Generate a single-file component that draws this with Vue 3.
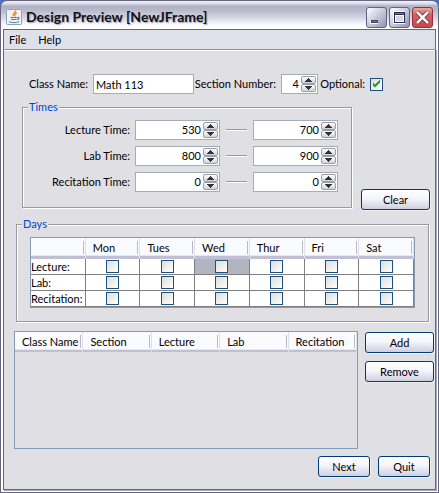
<script setup>
import { reactive, ref } from 'vue'

const className = ref('Math 113')
const section = ref(4)
const optional = ref(true)

const times = reactive([
  { name: 'Lecture Time', start: 530, end: 700 },
  { name: 'Lab Time', start: 800, end: 900 },
  { name: 'Recitation Time', start: 0, end: 0 },
])

const days = ['Mon', 'Tues', 'Wed', 'Thur', 'Fri', 'Sat']
const kinds = reactive(
  ['Lecture', 'Lab', 'Recitation'].map((name) => ({ name, days: days.map(() => false) })),
)
const selected = ref('0-2')

const columns = ['Class Name', 'Section', 'Lecture', 'Lab', 'Recitation']

function clearTimes() {
  times.forEach((t) => {
    t.start = 0
    t.end = 0
  })
}
</script>

<template>
  <div class="desktop">
    <div class="window">
      <header class="titlebar">
        <svg class="app-icon" viewBox="0 0 16 16" aria-hidden="true">
          <rect x="0.5" y="0.5" width="15" height="15" rx="1" fill="#eef3f7" stroke="#8fa3b5" />
          <path d="M9.500 1.500c.8 2-3.500 2.800-2.200 5.500M10.800 4c-2.600 1-2.300 2-1.600 3.500" fill="none" stroke="#f08a24" stroke-width="1.400" />
          <path d="M4.500 8.500h6.500M5 10.500h5.500M3 12.800c2.500 1 7.500 1 10 0M11.500 8.500c2-.5 2 1.500-.5 2" fill="none" stroke="#4f7ea3" stroke-width="1.200" />
        </svg>
        <h1>Design Preview [NewJFrame]</h1>
        <button class="caption" type="button" aria-label="Minimize">
          <svg viewBox="0 0 21 21"><path d="M4 13h8v4H4z" fill="#fff" /><path d="M5 13h7v3H5z" fill="#3f3f63" /><path d="M6 14h5v1H6z" fill="#77779b" /></svg>
        </button>
        <button class="caption" type="button" aria-label="Maximize">
          <svg viewBox="0 0 21 21"><path d="M4 4h12v13H4z" fill="#fff" /><path d="M5 5h11v11H5z" fill="#2b2b49" /><path d="M6 6h9v1H6z" fill="#77779b" /><path d="M6 8h9v7H6z" fill="#fff" /><path d="M7 9h7v5H7z" fill="#d5d5e3" /></svg>
        </button>
        <button class="caption close" type="button" aria-label="Close">
          <svg viewBox="0 0 21 21"><path d="M5 5l11 11M16 5L5 16" stroke="#5b2634" stroke-width="4" /><path d="M5 5l11 11M16 5L5 16" stroke="#fff" stroke-width="2.500" /></svg>
        </button>
      </header>

      <nav class="menubar">
        <button type="button">File</button>
        <button type="button">Help</button>
      </nav>

      <main>
        <div class="top-row">
          <label for="class-name">Class Name:</label>
          <input id="class-name" v-model="className" class="field" type="text" />
          <label for="section">Section Number:</label>
          <div class="spinner">
            <input id="section" v-model.number="section" type="text" inputmode="numeric" />
            <div class="arrows">
              <button type="button" aria-label="Increase section" @click="section++"><svg viewBox="0 0 7 4"><path d="M3 0h1v1h1v1h1v1h1v1H0V3h1V2h1V1h1z" /></svg></button>
              <button type="button" aria-label="Decrease section" @click="section--"><svg viewBox="0 0 7 4"><path d="M0 0h7v1H6v1H5v1H4v1H3V3H2V2H1V1H0z" /></svg></button>
            </div>
          </div>
          <label for="optional">Optional:</label>
          <input id="optional" v-model="optional" class="check" type="checkbox" />
        </div>

        <div class="times-row">
          <fieldset class="times">
            <legend>Times</legend>
            <div v-for="(t, i) in times" :key="t.name" class="time">
              <label :for="`start-${i}`">{{ t.name }}:</label>
              <template v-for="edge in ['start', 'end']" :key="edge">
                <span v-if="edge === 'end'" class="dash"></span>
                <div class="spinner">
                  <input :id="`${edge}-${i}`" v-model.number="t[edge]" type="text" inputmode="numeric" :aria-label="`${t.name} ${edge}`" />
                  <div class="arrows">
                    <button type="button" :aria-label="`Increase ${t.name} ${edge}`" @click="t[edge]++"><svg viewBox="0 0 7 4"><path d="M3 0h1v1h1v1h1v1h1v1H0V3h1V2h1V1h1z" /></svg></button>
                    <button type="button" :aria-label="`Decrease ${t.name} ${edge}`" @click="t[edge]--"><svg viewBox="0 0 7 4"><path d="M0 0h7v1H6v1H5v1H4v1H3V3H2V2H1V1H0z" /></svg></button>
                  </div>
                </div>
              </template>
            </div>
          </fieldset>
          <button class="button" type="button" @click="clearTimes">Clear</button>
        </div>

        <fieldset class="days">
          <legend>Days</legend>
          <table class="grid">
            <thead>
              <tr>
                <th aria-label="Type"></th>
                <th v-for="day in days" :key="day" scope="col">{{ day }}</th>
              </tr>
            </thead>
            <tbody>
              <tr v-for="(kind, r) in kinds" :key="kind.name">
                <th scope="row">{{ kind.name }}:</th>
                <td v-for="(day, c) in days" :key="day" :class="{ selected: selected === `${r}-${c}` }" @click="selected = `${r}-${c}`">
                  <input v-model="kind.days[c]" class="check" type="checkbox" :aria-label="`${kind.name} ${day}`" />
                </td>
              </tr>
            </tbody>
          </table>
        </fieldset>

        <div class="classes-row">
          <div class="list">
            <table class="classes">
              <thead>
                <tr>
                  <th v-for="c in columns" :key="c" scope="col">{{ c }}</th>
                </tr>
              </thead>
            </table>
          </div>
          <div class="stack">
            <button class="button" type="button">Add</button>
            <button class="button" type="button">Remove</button>
          </div>
        </div>

        <footer>
          <button class="button" type="button">Next</button>
          <button class="button" type="button">Quit</button>
        </footer>
      </main>
    </div>
  </div>
</template>

<style>
body {
  background: #4a70c8;
}
</style>

<style scoped>
* {
  box-sizing: border-box;
}

.desktop {
  font: 11px/14px Lato, sans-serif;
  color: #000;
}

button,
input {
  font: inherit;
  color: inherit;
  margin: 0;
}

.window {
  display: flex;
  flex-direction: column;
  min-height: 100vh;
  border: 1px solid #68667f;
  border-radius: 7px 7px 0 0;
  background: linear-gradient(#f4f4f8 0, #d8d8e4 3px, #b0b0c8 5px, #b8b8cc 9px, #d8d8e4 17px, #fbfbfd 24px, #fff 27px);
  padding: 0 2px 2px;
}

.titlebar {
  display: flex;
  align-items: center;
  gap: 2px;
  height: 28px;
  padding: 4px 3px 0 3px;
}

.app-icon {
  width: 16px;
  height: 16px;
}

h1 {
  flex: 1;
  margin: 0 0 0 2px;
  font: bold 14px/18px Lato, sans-serif;
  color: #111118;
  text-shadow: 1px 1px 1px #a5a5b8;
  white-space: nowrap;
}

.caption {
  width: 21px;
  height: 21px;
  padding: 0;
  border: 1px solid #626287;
  border-radius: 3px;
  background: linear-gradient(135deg, #fff, #c8c8dc 50%, #9292b4);
  overflow: hidden;
}

.caption svg {
  display: block;
  width: 21px;
  height: 21px;
  margin: -1px;
}

.caption.close {
  border-color: #93303f;
  background: linear-gradient(#f0a898, #d96060 35%, #c84850);
}

.menubar {
  display: flex;
  gap: 12px;
  height: 20px;
  padding: 0 5px;
  border: solid #68667f;
  border-width: 1px 1px 0;
  background: #dee1ea;
}

.menubar button {
  padding: 0;
  border: 0;
  background: none;
}

main {
  flex: 1;
  display: flex;
  flex-direction: column;
  padding: 24px 1px 12px 10px;
  border: 1px solid #68667f;
  border-top-color: #929298;
  background: #e0dfe3;
  box-shadow: 1px 1px 0 #a9a8bc, inset 0 1px 0 #fff;
}

.top-row {
  display: grid;
  grid-template-columns: 79px 1fr 87px 37px 52px 13px;
  align-items: center;
  padding-right: 51px;
}

.top-row label,
.time label {
  padding-right: 5px;
  text-align: right;
  white-space: nowrap;
}

.field,
.spinner {
  height: 20px;
  min-width: 0;
  border: 1px solid #a5acb2;
  background: #fff;
}

.field {
  padding: 0 2px;
}

.spinner {
  display: flex;
  padding: 1px;
}

.spinner input {
  flex: 1;
  width: 0;
  min-width: 0;
  padding: 0 2px 0 0;
  border: 0;
  background: none;
  text-align: right;
}

.arrows {
  display: flex;
  flex-direction: column;
  width: 15px;
}

.arrows button {
  flex: 1;
  display: flex;
  align-items: center;
  justify-content: center;
  min-height: 0;
  padding: 0;
  border: 1px solid #9c9cab;
  border-radius: 2px;
  background: linear-gradient(#fff, #d0d0dc);
}

.arrows svg {
  width: 7px;
  height: 4px;
  fill: #333;
}

.check {
  appearance: none;
  display: block;
  width: 13px;
  height: 13px;
  border: 1px solid #1c5180;
  background: linear-gradient(135deg, #dcdcd7, #fff);
}

.check:checked::before {
  content: "";
  display: block;
  width: 11px;
  height: 11px;
  background: #21a121;
  clip-path: polygon(2px 4px, 4px 6px, 9px 1px, 9px 4px, 4px 9px, 2px 7px);
}

fieldset {
  min-width: 0;
  margin: 0;
  border: 1px solid #9a9a9d;
  box-shadow: 1px 1px 0 #fff, inset 1px 1px 0 #fff;
}

legend {
  margin-left: -1px;
  padding: 0 1px;
  background: #e0dfe3;
  color: #0046d5;
}

.times-row {
  display: flex;
  align-items: flex-end;
  gap: 9px;
  margin: 6px 4px 0 8px;
}

.times {
  flex: 1;
  display: flex;
  flex-direction: column;
  gap: 6px;
  margin-bottom: 2px;
  padding: 6px 13px 15px 6px;
}

.time {
  display: grid;
  grid-template-columns: 106px 1fr 33px 1fr;
  align-items: center;
}

.dash {
  height: 2px;
  margin: 0 6px;
  border-top: 1px solid #9a9a9d;
  border-bottom: 1px solid #fff;
}

.button {
  width: 69px;
  height: 21px;
  padding: 0;
  border: 1px solid #003c74;
  border-radius: 3px;
  background: linear-gradient(#fff, #f5f5fb 45%, #cfcfe2);
  box-shadow: 1px 1px 0 #f0f0ec;
}

.days {
  margin: 7px 5px 0 2px;
  padding: 6px 13px 13px;
}

.days legend {
  margin-left: -8px;
}

table {
  width: 100%;
  table-layout: fixed;
  border-spacing: 0;
}

th {
  font-weight: normal;
  text-align: left;
  white-space: nowrap;
}

thead th {
  height: 20px;
  padding: 0 0 1px 7px;
  border-right: 1px solid #e0dfe8;
  background:
    linear-gradient(#b8b8c8, #b8b8c8) right 1px top 3px / 1px 13px no-repeat,
    linear-gradient(#fafbff 17px, #e6e5f0 17px, #e6e5f0 18px, #c0bfd3 18px);
}

.grid {
  border: 1px solid #7f9db9;
}

.grid thead th {
  height: 21px;
}

.grid tbody th,
.grid td {
  height: 16px;
  padding: 0;
  border: solid #808080;
  border-width: 0 1px 1px 0;
  background: #fff;
}

.grid td.selected {
  background: #b2b4bf;
}

.grid .check {
  margin: 0 auto;
}

.classes-row {
  flex: 1;
  display: flex;
  gap: 7px;
  margin-top: 9px;
}

.list {
  flex: 1;
  border: 1px solid #7f9db9;
}

.stack {
  display: flex;
  flex-direction: column;
  gap: 8px;
  padding-top: 1px;
}

footer {
  display: flex;
  justify-content: flex-end;
  gap: 8px;
  margin: 7px 4px 0 0;
}

footer .button {
  width: 52px;
}
</style>
